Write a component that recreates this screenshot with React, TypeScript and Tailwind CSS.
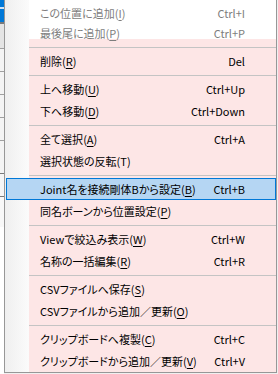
import React from "react";

type Item = {
  label: string;
  key: string;
  shortcut?: string;
  disabled?: boolean;
  underline?: boolean;
  active?: boolean;
};

type Entry = Item | "sep";

const entries: Entry[] = [
  { label: "この位置に追加", key: "I", shortcut: "Ctrl+I", disabled: true },
  { label: "最後尾に追加", key: "P", shortcut: "Ctrl+P", disabled: true },
  "sep",
  { label: "削除", key: "R", shortcut: "Del" },
  "sep",
  { label: "上へ移動", key: "U", shortcut: "Ctrl+Up" },
  { label: "下へ移動", key: "D", shortcut: "Ctrl+Down" },
  "sep",
  { label: "全て選択", key: "A", shortcut: "Ctrl+A" },
  { label: "選択状態の反転", key: "T", underline: false },
  "sep",
  { label: "Joint名を接続剛体Bから設定", key: "B", shortcut: "Ctrl+B", active: true },
  { label: "同名ボーンから位置設定", key: "P" },
  "sep",
  { label: "Viewで絞込み表示", key: "W", shortcut: "Ctrl+W" },
  { label: "名称の一括編集", key: "R", shortcut: "Ctrl+R" },
  "sep",
  { label: "CSVファイルへ保存", key: "S" },
  { label: "CSVファイルから追加／更新", key: "O" },
  "sep",
  { label: "クリップボードへ複製", key: "C", shortcut: "Ctrl+C" },
  { label: "クリップボードから追加／更新", key: "V", shortcut: "Ctrl+V" },
];

function MenuRow({ item, first }: { item: Item; first: boolean }) {
  const base =
    "ml-[1px] h-[22px] flex items-center justify-between pl-[33px] pr-[30px] border";
  const state = item.active
    ? " border-[#0078d7] bg-[#b5d6f3]"
    : " border-transparent";
  const color = item.disabled ? " text-[#7d7d7d]" : " text-black";
  return (
    <div className={base + state + color + (first ? " pt-[4px]" : "")}>
      <span className="whitespace-nowrap">
        {item.label}(
        {item.underline === false ? (
          item.key
        ) : (
          <span className="underline underline-offset-[2px]">{item.key}</span>
        )}
        )
      </span>
      {item.shortcut ? <span className="whitespace-nowrap">{item.shortcut}</span> : null}
    </div>
  );
}

export default function App() {
  let firstDone = false;
  return (
    <div className="w-[278px] h-[374px] overflow-hidden bg-[#f0f0f0] flex items-start font-['Noto_Sans_CJK_JP',sans-serif] text-[11px] leading-none [font-feature-settings:'palt']">
      {/* background table peeking on the left */}
      <div className="w-[4px] h-[374px] flex flex-col bg-white">
        <div className="h-[7px] bg-[#0078d7]" />
        <div className="h-[2px] bg-[#cfe3f5]" />
        <div className="h-[13px] bg-[#0078d7]" />
        <div className="h-[2px] bg-[#7a7a7a]" />
        <div className="h-[24px] bg-[#e4e4e4]" />
        <div className="h-[1px] bg-[#a0a0a0]" />
        <div className="h-[22px] bg-[#f4f4f4]" />
        <div className="h-[1px] bg-[#a0a0a0]" />
        <div className="h-[22px] bg-[#f4f4f4]" />
        <div className="h-[1px] bg-[#a0a0a0]" />
        <div className="h-[22px] bg-[#f4f4f4]" />
        <div className="h-[1px] bg-[#a0a0a0]" />
        <div className="h-[22px] bg-[#f4f4f4]" />
        <div className="h-[1px] bg-[#a0a0a0]" />
        <div className="h-[32px] bg-[#f4f4f4]" />
        <div className="h-[1px] bg-[#7a7a7a]" />
        <div className="h-[22px] bg-[#f6f6f6]" />
        <div className="h-[1px] bg-[#7a7a7a]" />
        <div className="h-[30px] bg-[#f8f8f8]" />
      </div>
      {/* context menu */}
      <div className="w-[273px] h-[373px] border-x border-b border-[#979797] bg-[linear-gradient(to_right,#efefef_0px,#fbfbfb_24px,transparent_24px),linear-gradient(to_bottom,#ffffff_39px,#fde6e6_39px)] flex flex-col">
        {entries.map((e, i) => {
          if (e === "sep") {
            return (
              <div key={i} className="h-[6px] pt-[3px] pl-[24px]">
                <div className="h-[1px] bg-[#c4c4c4]" />
              </div>
            );
          }
          const first = !firstDone;
          firstDone = true;
          return <MenuRow key={i} item={e} first={first} />;
        })}
      </div>
    </div>
  );
}
